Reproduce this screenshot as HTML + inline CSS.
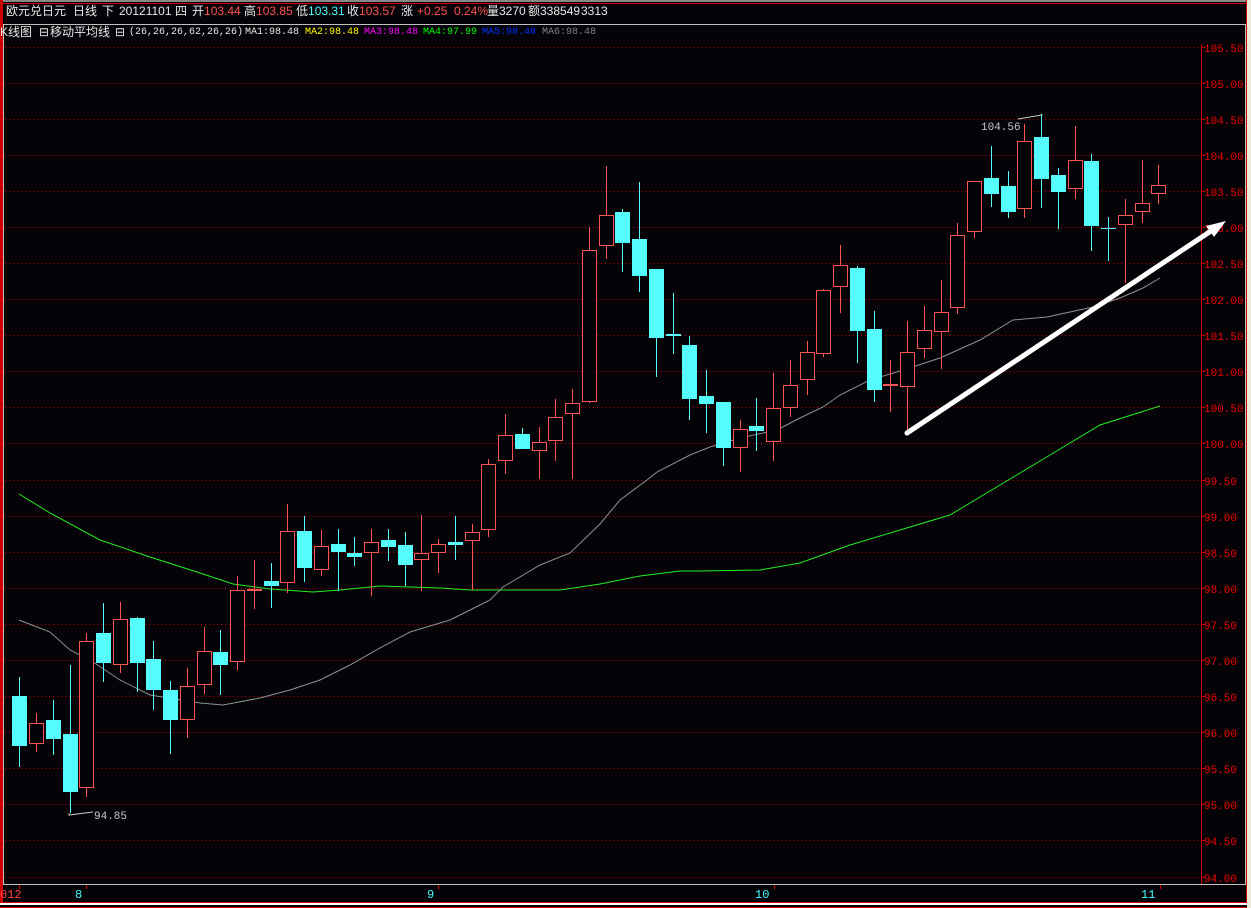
<!DOCTYPE html>
<html><head><meta charset="utf-8"><style>
html,body{margin:0;padding:0;background:#050308;width:1251px;height:908px;overflow:hidden}
.h{position:absolute;top:4px;font-family:"Liberation Sans","Noto Sans CJK SC",sans-serif;font-size:12px;white-space:pre;line-height:14px;color:#e8e8e8}
.n{position:absolute;top:26px;font-family:"Liberation Mono",monospace;font-size:10px;white-space:pre;line-height:13px;color:#e8e8e8}
.k{position:absolute;top:25px;font-family:"Liberation Sans","Noto Sans CJK SC",sans-serif;font-size:12px;white-space:pre;line-height:14px;color:#e8e8e8}
.r{color:#ff5050}.c{color:#40ffff}
</style></head><body>
<svg width="1251" height="908" style="position:absolute;left:0;top:0" shape-rendering="crispEdges">
<rect x="0" y="0" width="1251" height="908" fill="#050308"/>
<rect x="0" y="0" width="1251" height="2" fill="#888"/>
<rect x="0" y="3" width="1246" height="1" fill="#d00000"/>
<rect x="0" y="24" width="1245" height="1" fill="#c0c0c0"/>
<rect x="0" y="0" width="3" height="905" fill="#d00000"/>
<rect x="3" y="24" width="1" height="860" fill="#c0c0c0"/>
<rect x="1245" y="24" width="1" height="861" fill="#c0c0c0"/>
<rect x="1246" y="0" width="1" height="905" fill="#d00000"/>
<rect x="1247" y="0" width="4" height="908" fill="#ece9d8"/>
<rect x="3" y="884" width="1243" height="1" fill="#c0c0c0"/>
<rect x="0" y="902" width="1247" height="1" fill="#d00000"/>
<rect x="0" y="903" width="1247" height="2" fill="#ffffff"/>
<rect x="0" y="907" width="1247" height="1" fill="#d00000"/>
<rect x="1201" y="44" width="1" height="840" fill="#d00000"/>
<g stroke="#c80000" stroke-dasharray="1 3" stroke-width="1">
<line x1="5" x2="1201" y1="47.5" y2="47.5"/><line x1="5" x2="1201" y1="83.5" y2="83.5"/><line x1="5" x2="1201" y1="119.5" y2="119.5"/><line x1="5" x2="1201" y1="155.5" y2="155.5"/><line x1="5" x2="1201" y1="191.5" y2="191.5"/><line x1="5" x2="1201" y1="227.5" y2="227.5"/><line x1="5" x2="1201" y1="263.5" y2="263.5"/><line x1="5" x2="1201" y1="299.5" y2="299.5"/><line x1="5" x2="1201" y1="335.5" y2="335.5"/><line x1="5" x2="1201" y1="371.5" y2="371.5"/><line x1="5" x2="1201" y1="407.5" y2="407.5"/><line x1="5" x2="1201" y1="443.5" y2="443.5"/><line x1="5" x2="1201" y1="480.5" y2="480.5"/><line x1="5" x2="1201" y1="516.5" y2="516.5"/><line x1="5" x2="1201" y1="552.5" y2="552.5"/><line x1="5" x2="1201" y1="588.5" y2="588.5"/><line x1="5" x2="1201" y1="624.5" y2="624.5"/><line x1="5" x2="1201" y1="660.5" y2="660.5"/><line x1="5" x2="1201" y1="696.5" y2="696.5"/><line x1="5" x2="1201" y1="732.5" y2="732.5"/><line x1="5" x2="1201" y1="768.5" y2="768.5"/><line x1="5" x2="1201" y1="804.5" y2="804.5"/><line x1="5" x2="1201" y1="840.5" y2="840.5"/><line x1="5" x2="1201" y1="877.5" y2="877.5"/>
</g>
<g stroke="#d00000"><line x1="1201" x2="1205" y1="47.5" y2="47.5"/><line x1="1201" x2="1205" y1="83.5" y2="83.5"/><line x1="1201" x2="1205" y1="119.5" y2="119.5"/><line x1="1201" x2="1205" y1="155.5" y2="155.5"/><line x1="1201" x2="1205" y1="191.5" y2="191.5"/><line x1="1201" x2="1205" y1="227.5" y2="227.5"/><line x1="1201" x2="1205" y1="263.5" y2="263.5"/><line x1="1201" x2="1205" y1="299.5" y2="299.5"/><line x1="1201" x2="1205" y1="335.5" y2="335.5"/><line x1="1201" x2="1205" y1="371.5" y2="371.5"/><line x1="1201" x2="1205" y1="407.5" y2="407.5"/><line x1="1201" x2="1205" y1="443.5" y2="443.5"/><line x1="1201" x2="1205" y1="480.5" y2="480.5"/><line x1="1201" x2="1205" y1="516.5" y2="516.5"/><line x1="1201" x2="1205" y1="552.5" y2="552.5"/><line x1="1201" x2="1205" y1="588.5" y2="588.5"/><line x1="1201" x2="1205" y1="624.5" y2="624.5"/><line x1="1201" x2="1205" y1="660.5" y2="660.5"/><line x1="1201" x2="1205" y1="696.5" y2="696.5"/><line x1="1201" x2="1205" y1="732.5" y2="732.5"/><line x1="1201" x2="1205" y1="768.5" y2="768.5"/><line x1="1201" x2="1205" y1="804.5" y2="804.5"/><line x1="1201" x2="1205" y1="840.5" y2="840.5"/><line x1="1201" x2="1205" y1="877.5" y2="877.5"/>
<line x1="19.5" x2="19.5" y1="885" y2="889"/><line x1="86.5" x2="86.5" y1="885" y2="889"/><line x1="438.5" x2="438.5" y1="885" y2="889"/><line x1="774.5" x2="774.5" y1="885" y2="889"/><line x1="1160.5" x2="1160.5" y1="885" y2="889"/></g>
<g font-family="Liberation Mono,monospace" font-size="11" fill="#f00000">
<text x="1204" y="52">105.50</text><text x="1204" y="88">105.00</text><text x="1204" y="124">104.50</text><text x="1204" y="160">104.00</text><text x="1204" y="196">103.50</text><text x="1204" y="232">103.00</text><text x="1204" y="268">102.50</text><text x="1204" y="304">102.00</text><text x="1204" y="340">101.50</text><text x="1204" y="376">101.00</text><text x="1204" y="412">100.50</text><text x="1204" y="448">100.00</text><text x="1204" y="485">99.50</text><text x="1204" y="521">99.00</text><text x="1204" y="557">98.50</text><text x="1204" y="593">98.00</text><text x="1204" y="629">97.50</text><text x="1204" y="665">97.00</text><text x="1204" y="701">96.50</text><text x="1204" y="737">96.00</text><text x="1204" y="773">95.50</text><text x="1204" y="809">95.00</text><text x="1204" y="845">94.50</text><text x="1204" y="882">94.00</text>
<text x="0" y="898" fill="#ff4040" font-size="12">012</text>
<text x="75" y="898" fill="#40ffff" font-size="12">8</text><text x="427" y="898" fill="#40ffff" font-size="12">9</text><text x="755" y="898" fill="#40ffff" font-size="12">10</text><text x="1141" y="898" fill="#40ffff" font-size="12">11</text>
<text x="94" y="819" fill="#c8c8c8">94.85</text><text x="981" y="130" fill="#c8c8c8">104.56</text>
</g>
<g fill="none" stroke-width="1" shape-rendering="auto">
<polyline stroke="#22ee22" points="19,494 50,513 100,540 150,557 200,573 233,584 270,589 313,592 340,590 380,586 410,587 440,588 470,590 500,590 560,590 600,584 640,576 680,571 700,571 760,570 800,563 850,545 900,530 950,515 1000,485 1050,455 1100,425 1160,406"/>
<polyline stroke="#909090" points="19,620 50,632 70,650 90,660 120,680 150,695 200,703 223,705 260,698 290,690 320,680 350,665 380,648 410,632 450,620 480,605 490,600 503,587 540,565 570,553 600,524 620,500 647,480 657,472 690,455 710,447 740,438 777,430 800,418 823,407 840,395 870,380 900,371 940,358 980,340 1013,320 1047,317 1093,307 1120,298 1143,288 1160,278"/>
<polyline stroke="#c8c8c8" points="69,813 69,815 93,812"/>
<polyline stroke="#c8c8c8" points="1018,119 1042,115 1042,114"/>
</g>
<g fill="#54fcfc" stroke="#54fcfc">
<line x1="19.5" x2="19.5" y1="677" y2="767"/><rect x="12" y="696" width="15" height="50" stroke="none"/>
<line x1="53.5" x2="53.5" y1="700" y2="755"/><rect x="46" y="720" width="15" height="19" stroke="none"/>
<line x1="70.5" x2="70.5" y1="665" y2="813"/><rect x="63" y="734" width="15" height="58" stroke="none"/>
<line x1="103.5" x2="103.5" y1="603" y2="682"/><rect x="96" y="633" width="15" height="30" stroke="none"/>
<line x1="137.5" x2="137.5" y1="617" y2="692"/><rect x="130" y="618" width="15" height="45" stroke="none"/>
<line x1="153.5" x2="153.5" y1="641" y2="710"/><rect x="146" y="659" width="15" height="31" stroke="none"/>
<line x1="170.5" x2="170.5" y1="681" y2="754"/><rect x="163" y="690" width="15" height="30" stroke="none"/>
<line x1="220.5" x2="220.5" y1="630" y2="695"/><rect x="213" y="652" width="15" height="13" stroke="none"/>
<line x1="271.5" x2="271.5" y1="563" y2="608"/><rect x="264" y="581" width="15" height="5" stroke="none"/>
<line x1="304.5" x2="304.5" y1="516" y2="582"/><rect x="297" y="531" width="15" height="37" stroke="none"/>
<line x1="338.5" x2="338.5" y1="529" y2="591"/><rect x="331" y="544" width="15" height="8" stroke="none"/>
<line x1="354.5" x2="354.5" y1="537" y2="566"/><rect x="347" y="553" width="15" height="4" stroke="none"/>
<line x1="388.5" x2="388.5" y1="529" y2="561"/><rect x="381" y="540" width="15" height="7" stroke="none"/>
<line x1="405.5" x2="405.5" y1="532" y2="586"/><rect x="398" y="545" width="15" height="20" stroke="none"/>
<line x1="455.5" x2="455.5" y1="516" y2="560"/><rect x="448" y="542" width="15" height="3" stroke="none"/>
<line x1="522.5" x2="522.5" y1="428" y2="449"/><rect x="515" y="434" width="15" height="15" stroke="none"/>
<line x1="622.5" x2="622.5" y1="209" y2="272"/><rect x="615" y="212" width="15" height="31" stroke="none"/>
<line x1="639.5" x2="639.5" y1="182" y2="292"/><rect x="632" y="239" width="15" height="37" stroke="none"/>
<line x1="656.5" x2="656.5" y1="269" y2="377"/><rect x="649" y="269" width="15" height="69" stroke="none"/>
<line x1="673.5" x2="673.5" y1="293" y2="354"/><rect x="666" y="334" width="15" height="2" stroke="none"/>
<line x1="689.5" x2="689.5" y1="336" y2="420"/><rect x="682" y="345" width="15" height="54" stroke="none"/>
<line x1="706.5" x2="706.5" y1="370" y2="433"/><rect x="699" y="396" width="15" height="8" stroke="none"/>
<line x1="723.5" x2="723.5" y1="402" y2="466"/><rect x="716" y="402" width="15" height="46" stroke="none"/>
<line x1="756.5" x2="756.5" y1="398" y2="451"/><rect x="749" y="426" width="15" height="5" stroke="none"/>
<line x1="857.5" x2="857.5" y1="266" y2="363"/><rect x="850" y="268" width="15" height="63" stroke="none"/>
<line x1="874.5" x2="874.5" y1="311" y2="402"/><rect x="867" y="329" width="15" height="61" stroke="none"/>
<line x1="991.5" x2="991.5" y1="146" y2="207"/><rect x="984" y="178" width="15" height="16" stroke="none"/>
<line x1="1008.5" x2="1008.5" y1="171" y2="218"/><rect x="1001" y="186" width="15" height="26" stroke="none"/>
<line x1="1041.5" x2="1041.5" y1="114" y2="208"/><rect x="1034" y="137" width="15" height="42" stroke="none"/>
<line x1="1058.5" x2="1058.5" y1="168" y2="229"/><rect x="1051" y="175" width="15" height="17" stroke="none"/>
<line x1="1091.5" x2="1091.5" y1="154" y2="251"/><rect x="1084" y="161" width="15" height="65" stroke="none"/>
<line x1="1108.5" x2="1108.5" y1="217" y2="261"/><rect x="1101" y="228" width="15" height="1" stroke="none"/>
</g>
<g stroke="#ff5454">
<line x1="36.5" x2="36.5" y1="713" y2="752"/><line x1="86.5" x2="86.5" y1="633" y2="797"/><line x1="120.5" x2="120.5" y1="602" y2="673"/><line x1="187.5" x2="187.5" y1="668" y2="738"/><line x1="204.5" x2="204.5" y1="627" y2="694"/><line x1="237.5" x2="237.5" y1="576" y2="670"/><line x1="254.5" x2="254.5" y1="560" y2="609"/><line x1="287.5" x2="287.5" y1="504" y2="593"/><line x1="321.5" x2="321.5" y1="530" y2="576"/><line x1="371.5" x2="371.5" y1="529" y2="596"/><line x1="421.5" x2="421.5" y1="515" y2="591"/><line x1="438.5" x2="438.5" y1="539" y2="573"/><line x1="472.5" x2="472.5" y1="524" y2="590"/><line x1="488.5" x2="488.5" y1="459" y2="537"/><line x1="505.5" x2="505.5" y1="414" y2="474"/><line x1="539.5" x2="539.5" y1="427" y2="479"/><line x1="555.5" x2="555.5" y1="399" y2="461"/><line x1="572.5" x2="572.5" y1="389" y2="479"/><line x1="589.5" x2="589.5" y1="227" y2="403"/><line x1="606.5" x2="606.5" y1="166" y2="259"/><line x1="740.5" x2="740.5" y1="420" y2="472"/><line x1="773.5" x2="773.5" y1="373" y2="461"/><line x1="790.5" x2="790.5" y1="360" y2="417"/><line x1="807.5" x2="807.5" y1="341" y2="395"/><line x1="823.5" x2="823.5" y1="289" y2="357"/><line x1="840.5" x2="840.5" y1="245" y2="313"/><line x1="890.5" x2="890.5" y1="360" y2="412"/><line x1="907.5" x2="907.5" y1="321" y2="432"/><line x1="924.5" x2="924.5" y1="306" y2="358"/><line x1="941.5" x2="941.5" y1="280" y2="369"/><line x1="957.5" x2="957.5" y1="223" y2="314"/><line x1="974.5" x2="974.5" y1="181" y2="238"/><line x1="1024.5" x2="1024.5" y1="124" y2="218"/><line x1="1075.5" x2="1075.5" y1="126" y2="199"/><line x1="1125.5" x2="1125.5" y1="199" y2="283"/><line x1="1142.5" x2="1142.5" y1="160" y2="223"/><line x1="1158.5" x2="1158.5" y1="165" y2="204"/>
</g>
<g fill="#050308" stroke="#ff5454">
<rect x="29.5" y="723.5" width="14" height="20"/><rect x="79.5" y="641.5" width="14" height="146"/><rect x="113.5" y="619.5" width="14" height="45"/><rect x="180.5" y="686.5" width="14" height="33"/><rect x="197.5" y="651.5" width="14" height="33"/><rect x="230.5" y="590.5" width="14" height="71"/><rect x="280.5" y="531.5" width="14" height="51"/><rect x="314.5" y="546.5" width="14" height="23"/><rect x="364.5" y="542.5" width="14" height="10"/><rect x="414.5" y="553.5" width="14" height="6"/><rect x="431.5" y="544.5" width="14" height="8"/><rect x="465.5" y="532.5" width="14" height="8"/><rect x="481.5" y="464.5" width="14" height="65"/><rect x="498.5" y="435.5" width="14" height="25"/><rect x="532.5" y="442.5" width="14" height="8"/><rect x="548.5" y="417.5" width="14" height="23"/><rect x="565.5" y="403.5" width="14" height="10"/><rect x="582.5" y="250.5" width="14" height="151"/><rect x="599.5" y="215.5" width="14" height="30"/><rect x="733.5" y="429.5" width="14" height="18"/><rect x="766.5" y="408.5" width="14" height="33"/><rect x="783.5" y="385.5" width="14" height="22"/><rect x="800.5" y="352.5" width="14" height="27"/><rect x="816.5" y="290.5" width="14" height="63"/><rect x="833.5" y="265.5" width="14" height="21"/><rect x="900.5" y="352.5" width="14" height="34"/><rect x="917.5" y="330.5" width="14" height="18"/><rect x="934.5" y="312.5" width="14" height="19"/><rect x="950.5" y="235.5" width="14" height="72"/><rect x="967.5" y="181.5" width="14" height="50"/><rect x="1017.5" y="141.5" width="14" height="67"/><rect x="1068.5" y="160.5" width="14" height="28"/><rect x="1118.5" y="215.5" width="14" height="9"/><rect x="1135.5" y="203.5" width="14" height="8"/><rect x="1151.5" y="185.5" width="14" height="8"/>
</g>
<rect x="247" y="589" width="15" height="2" fill="#ff5454"/>
<rect x="883" y="384" width="15" height="2" fill="#ff5454"/>
<g shape-rendering="auto"><line x1="907" y1="433" x2="1214" y2="229" stroke="#fff" stroke-width="5" stroke-linecap="round"/>
<polygon points="1226,221 1206,226 1214,237" fill="#fff"/></g>
</svg>
<div class="h" style="left:6px">欧元兑日元</div>
<div class="h" style="left:73px">日线</div>
<div class="h" style="left:102px">下</div>
<div class="h" style="left:119px">20121101</div>
<div class="h" style="left:175px">四</div>
<div class="h" style="left:192px">开<span class="r">103.44</span></div>
<div class="h" style="left:244px">高<span class="r">103.85</span></div>
<div class="h" style="left:296px">低<span class="c">103.31</span></div>
<div class="h" style="left:347px">收<span class="r">103.57</span></div>
<div class="h" style="left:401px">涨</div>
<div class="h r" style="left:417px">+0.25</div>
<div class="h r" style="left:454px">0.24%</div>
<div class="h" style="left:487px">量3270</div>
<div class="h" style="left:528px">额338549</div>
<div class="h" style="left:581px">3313</div>
<div class="k" style="left:0px">K线图</div>
<div class="k" style="left:39px">⊟</div>
<div class="k" style="left:50px">移动平均线</div>
<div class="k" style="left:115px">⊟</div>
<div class="n" style="left:129px">(26,26,26,62,26,26)</div>
<div class="n" style="left:245px">MA1:98.48</div>
<div class="n" style="left:305px;color:#ffff00">MA2:98.48</div>
<div class="n" style="left:364px;color:#ff00ff">MA3:98.48</div>
<div class="n" style="left:423px;color:#00ff00">MA4:97.99</div>
<div class="n" style="left:482px;color:#0030ff">MA5:98.48</div>
<div class="n" style="left:542px;color:#808080">MA6:98.48</div>
</body></html>
